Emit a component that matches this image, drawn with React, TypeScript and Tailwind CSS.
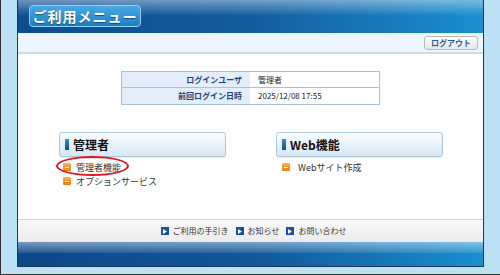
const jp = { fontFamily: '"Noto Sans CJK JP", "Noto Sans", sans-serif' }

function Bullet() {
  return (
    <span className="inline-flex w-[8px] h-[8px] bg-gradient-to-b from-[#ffb347] to-[#f07d00] rounded-[1px] items-center justify-center">
      <span className="block w-[4px] h-[1px] bg-white" />
    </span>
  )
}

function FooterIcon() {
  return (
    <span className="inline-flex w-[8px] h-[8px] bg-[#1a4f9a] items-center justify-center">
      <svg width="4" height="5" viewBox="0 0 4 5">
        <polygon points="0,0 4,2.5 0,5" fill="#fff" />
      </svg>
    </span>
  )
}

function SectionHead({ title }: { title: string }) {
  return (
    <div className="h-[25px] border border-[#a9c8de] rounded-[3px] bg-gradient-to-b from-[#fbfdff] via-[#eaf3fa] to-[#d6e7f4] flex items-center pl-[5px] gap-[4px] shadow-[0_1px_0_#e3eef6]">
      <span className="block w-[4px] h-[11px] bg-gradient-to-b from-[#3a8fd8] to-[#0b4d96]" />
      <span className="text-[12px] font-bold text-[#111] leading-none">{title}</span>
    </div>
  )
}

export default function App() {
  return (
    <div
      className="w-[500px] h-[275px] bg-[#bde1f4] border-l border-b border-[#333] flex flex-col overflow-hidden"
      style={jp}
    >
      <div className="ml-[16px] w-[467px] h-[267px] border-x border-b border-[#1f3550] flex flex-col bg-white">
        {/* header */}
        <div className="h-[33px] relative bg-gradient-to-r from-[#0d4c8f] via-[#135d9f] to-[#1b8fd0] flex items-center pl-[11px]">
          <div className="absolute inset-x-0 top-0 h-[16px] bg-gradient-to-b from-white/40 to-white/0" />
          <div className="relative w-[112px] h-[22px] rounded-[4px] border border-[#8fd0f3] bg-gradient-to-b from-[#4aa8e3] to-[#1a7fc4] flex items-center justify-center mt-[-1px]">
            <span className="text-white text-[14px] font-bold leading-none tracking-[1px] [text-shadow:0_1px_1px_rgba(0,40,90,0.6)]">
              ご利用メニュー
            </span>
          </div>
        </div>
        {/* sub bar */}
        <div className="h-[21px] bg-[#eef6fd] border-b-2 border-[#c8deec] flex items-center justify-end pr-[5px]">
          <div className="h-[14px] px-[6px] rounded-[3px] border border-[#b9b9b9] bg-gradient-to-b from-white to-[#e6e6e6] flex items-center">
            <span className="text-[8px] font-bold text-[#1b5f9f] leading-none">ログアウト</span>
          </div>
        </div>
        {/* content */}
        <div className="flex-1 flex flex-col">
          <div className="mt-[17px] ml-[103px] w-[259px] border border-[#a4c4de] text-[8px] leading-none">
            <div className="flex h-[16px] border-b border-[#a4c4de]">
              <div className="w-[128px] bg-[#e3eefa] flex items-center justify-end pr-[8px] font-bold text-[#1d3f78]">
                ログインユーザ
              </div>
              <div className="flex-1 flex items-center pl-[8px] text-[#222]">管理者</div>
            </div>
            <div className="flex h-[16px]">
              <div className="w-[128px] bg-[#e3eefa] flex items-center justify-end pr-[8px] font-bold text-[#1d3f78]">
                前回ログイン日時
              </div>
              <div className="flex-1 flex items-center pl-[8px] text-[#222]">2025/12/08 17:55</div>
            </div>
          </div>
          <div className="mt-[27px] flex pl-[41px] gap-[50px]">
            <div className="w-[167px]">
              <SectionHead title="管理者" />
              <div className="mt-[5px] pl-[4px] flex flex-col gap-[4px] text-[9px] text-[#333] leading-none">
                <div className="relative flex items-center gap-[5px] h-[10px]">
                  <Bullet />
                  <span>管理者機能</span>
                  <span className="absolute left-[-7px] top-[-6px] w-[73px] h-[20px] border-[2px] border-[#e0141c] rounded-[50%]" />
                </div>
                <div className="flex items-center gap-[5px] h-[10px]">
                  <Bullet />
                  <span>オプションサービス</span>
                </div>
              </div>
            </div>
            <div className="w-[167px]">
              <SectionHead title="Web機能" />
              <div className="mt-[5px] pl-[6px] flex flex-col gap-[4px] text-[9px] text-[#333] leading-none">
                <div className="flex items-center gap-[8px] h-[10px]">
                  <Bullet />
                  <span>Webサイト作成</span>
                </div>
              </div>
            </div>
          </div>
        </div>
        {/* footer links */}
        <div className="h-[23px] border-t border-[#d4d4d4] bg-gradient-to-b from-[#f9f9f9] to-[#ebebeb] flex items-center justify-center gap-[7px] text-[8px] text-[#333] leading-none pl-[6px]">
          <div className="flex items-center gap-[4px]">
            <FooterIcon />
            <span>ご利用の手引き</span>
          </div>
          <div className="flex items-center gap-[4px]">
            <FooterIcon />
            <span>お知らせ</span>
          </div>
          <div className="flex items-center gap-[4px]">
            <FooterIcon />
            <span>お問い合わせ</span>
          </div>
        </div>
        {/* bottom bar */}
        <div className="h-[24px] relative bg-gradient-to-r from-[#0d4788] via-[#115799] to-[#1a8fd0]">
          <div className="absolute inset-x-0 top-0 h-[11px] bg-gradient-to-b from-white/45 to-white/10" />
        </div>
      </div>
    </div>
  )
}
